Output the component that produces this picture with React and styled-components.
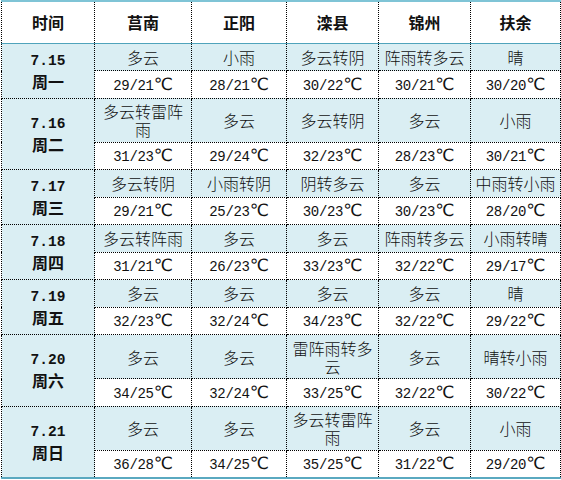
import React from "react";
import styled, { createGlobalStyle } from "styled-components";

const GlobalStyle = createGlobalStyle`
  html, body {
    margin: 0;
    padding: 0;
    background: #ffffff;
  }
  body {
    font-family: "Noto Sans CJK SC", sans-serif;
    color: #111;
  }
`;

const cities = ["莒南", "正阳", "滦县", "锦州", "扶余"];
const widths = [93, 97, 95, 92, 92, 90];

const days = [
  {
    date: "7.15",
    week: "周一",
    tall: false,
    weather: ["多云", "小雨", "多云转阴", "阵雨转多云", "晴"],
    temps: ["29/21", "28/21", "30/22", "30/21", "30/20"],
  },
  {
    date: "7.16",
    week: "周二",
    tall: true,
    weather: ["多云转雷阵雨", "多云", "多云转阴", "多云", "小雨"],
    temps: ["31/23", "29/24", "32/23", "28/23", "30/21"],
  },
  {
    date: "7.17",
    week: "周三",
    tall: false,
    weather: ["多云转阴", "小雨转阴", "阴转多云", "多云", "中雨转小雨"],
    temps: ["29/21", "25/23", "30/23", "30/23", "28/20"],
  },
  {
    date: "7.18",
    week: "周四",
    tall: false,
    weather: ["多云转阵雨", "多云", "多云", "阵雨转多云", "小雨转晴"],
    temps: ["31/21", "26/23", "33/23", "32/22", "29/17"],
  },
  {
    date: "7.19",
    week: "周五",
    tall: false,
    weather: ["多云", "多云", "多云", "多云", "晴"],
    temps: ["32/23", "32/24", "34/23", "32/22", "29/22"],
  },
  {
    date: "7.20",
    week: "周六",
    tall: true,
    weather: ["多云", "多云", "雷阵雨转多云", "多云", "晴转小雨"],
    temps: ["34/25", "32/24", "33/25", "32/22", "30/22"],
  },
  {
    date: "7.21",
    week: "周日",
    tall: true,
    weather: ["多云", "多云", "多云转雷阵雨", "多云", "小雨"],
    temps: ["36/28", "34/25", "35/25", "31/22", "29/20"],
  },
];

const Temp = ({ value }) => (
  <TempText>
    {value}
    <Degree>℃</Degree>
  </TempText>
);

const App = () => {
  return (
    <>
      <GlobalStyle />
      <Table>
        <colgroup>
          {widths.map((w, i) => (
            <col key={i} style={{ width: w }} />
          ))}
        </colgroup>
        <thead>
          <HeadRow>
            <HeadCell>时间</HeadCell>
            {cities.map((c) => (
              <HeadCell key={c}>{c}</HeadCell>
            ))}
          </HeadRow>
        </thead>
        <tbody>
          {days.map((d, idx) => (
            <React.Fragment key={d.date}>
              <Row tall={d.tall}>
                <DateCell rowSpan={2} last={idx === days.length - 1}>
                  <DateNum>{d.date}</DateNum>
                  <Week>{d.week}</Week>
                </DateCell>
                {d.weather.map((w, i) => (
                  <WeatherCell key={i}>{w}</WeatherCell>
                ))}
              </Row>
              <Row>
                {d.temps.map((t, i) => (
                  <TempCell key={i} last={idx === days.length - 1}>
                    <Temp value={t} />
                  </TempCell>
                ))}
              </Row>
            </React.Fragment>
          ))}
        </tbody>
      </Table>
    </>
  );
};

const Table = styled.table`
  border-collapse: collapse;
  table-layout: fixed;
  width: 560px;
  margin-left: 1px;
  border-top: 2px solid #7fc4d6;
  border-bottom: 2px solid #5aa9c0;
`;

const HeadRow = styled.tr`
  height: 42px;
`;

const HeadCell = styled.th`
  padding: 0;
  background: #ffffff;
  font-size: 16px;
  font-weight: 700;
  text-align: center;
  border-left: 1px dotted #000;
  border-right: 1px dotted #000;
  border-bottom: 1px solid #4fa3bb;
`;

const Row = styled.tr`
  height: ${(props) => (props.tall ? "44px" : "27.5px")};
`;

const cellBase = `
  padding: 0 3px;
  text-align: center;
  vertical-align: middle;
  border: 1px dotted #000;
  font-size: 16px;
  line-height: 18px;
`;

const DateCell = styled.td`
  ${cellBase}
  background: #daeef3;
  font-weight: 700;
  ${(props) => (props.last ? "border-bottom: none;" : "")}
`;

const DateNum = styled.div`
  font-family: "Liberation Mono", monospace;
  font-size: 14.5px;
  line-height: 20px;
  font-weight: 700;
`;

const Week = styled.div`
  font-size: 16px;
  line-height: 20px;
  font-weight: 700;
`;

const WeatherCell = styled.td`
  ${cellBase}
  background: #daeef3;
  font-weight: 300;
`;

const TempCell = styled.td`
  ${cellBase}
  background: #ffffff;
  ${(props) => (props.last ? "border-bottom: none;" : "")}
`;

const TempText = styled.span`
  font-family: "Liberation Mono", "Noto Sans CJK SC", monospace;
  font-size: 14px;
  letter-spacing: -0.3px;
`;

const Degree = styled.span`
  font-family: "DejaVu Sans", "Noto Sans CJK SC", sans-serif;
  font-size: 17px;
  letter-spacing: 0;
`;

export default App;
